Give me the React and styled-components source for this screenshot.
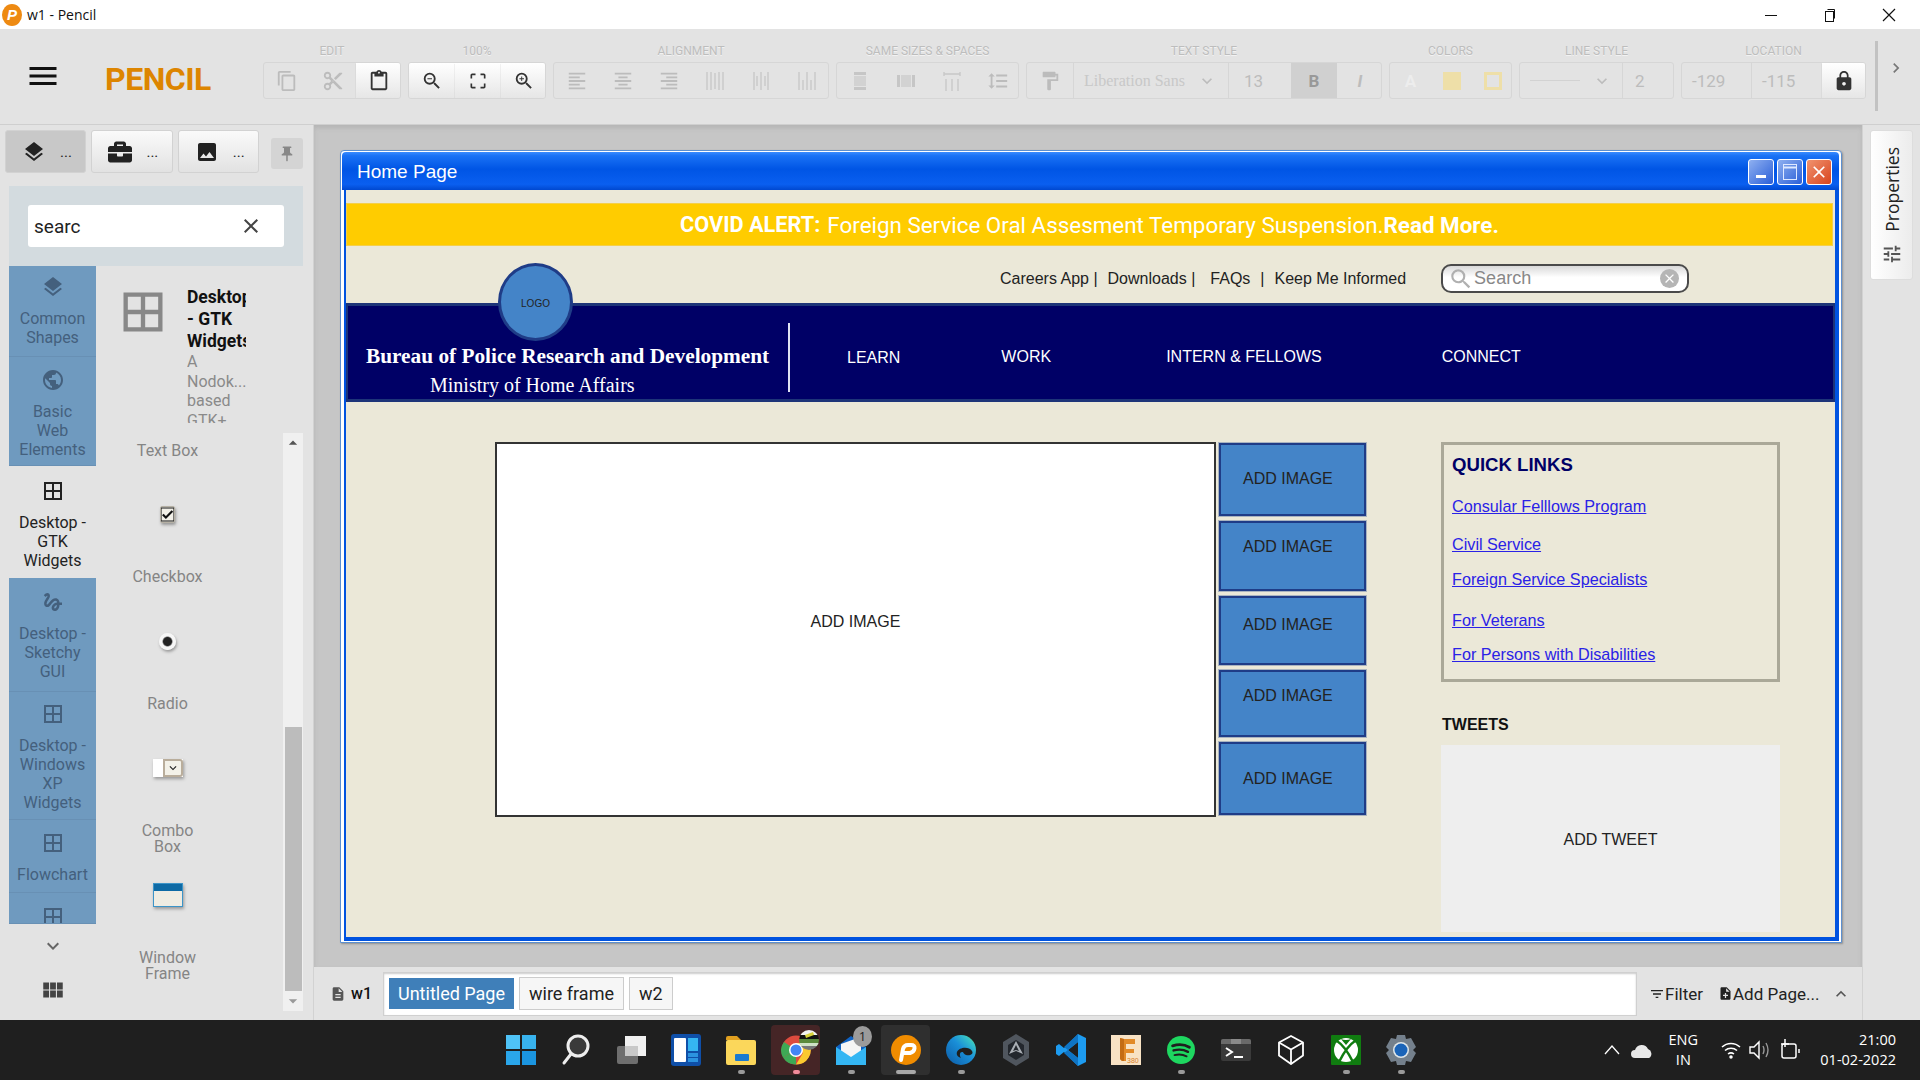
import React from 'react'
import styled, { createGlobalStyle } from 'styled-components'
import { FaBriefcase } from 'react-icons/fa'
import {
  MdContentCopy, MdContentCut, MdContentPaste, MdZoomIn, MdZoomOut, MdCropFree,
  MdFormatAlignLeft, MdFormatAlignCenter, MdFormatAlignRight, MdFormatPaint,
  MdFormatLineSpacing, MdLock, MdLayers, MdImage, MdPushPin, MdClose,
  MdPublic, MdBorderAll, MdGesture, MdViewModule, MdKeyboardArrowDown, MdKeyboardArrowUp,
  MdKeyboardArrowRight, MdDescription, MdFilterList, MdNoteAdd, MdTune, MdSearch,
  MdArrowDropUp, MdArrowDropDown, MdCheck, MdMenu,
} from 'react-icons/md'

const GlobalStyle = createGlobalStyle`
  html, body { margin: 0; padding: 0; }
  body { width: 1920px; height: 1080px; overflow: hidden; font-family: Roboto, sans-serif; }
  * { box-sizing: border-box; }
`

const Page = styled.div`
  width: 1920px;
  height: 1080px;
  display: flex;
  flex-direction: column;
  background: #e3e3e3;
`

/* title bar */
const TitleBar = styled.div`
  height: 29px;
  background: #fff;
  display: flex;
  align-items: center;
  padding-left: 2px;
  font: 14px 'Open Sans', sans-serif;
  color: #111;
`
const AppBadge = styled.div`
  width: 20px;
  height: 22px;
  margin-right: 5px;
  border-radius: 50%;
  background: #ee8a12;
  color: #fff;
  font: italic bold 15px/22px 'Liberation Sans', sans-serif;
  text-align: center;
`
const WinButtons = styled.div`
  margin-left: auto;
  padding-right: 2px;
  display: flex;
`
const WinButton = styled.div`
  width: 59px;
  height: 29px;
  display: flex;
  align-items: center;
  justify-content: center;
`

/* toolbar */
const Toolbar = styled.div`
  height: 96px;
  display: flex;
  align-items: flex-start;
  padding-left: 25px;
  border-bottom: 1px solid #cfcfcf;
  position: relative;
`
const MenuIcon = styled.div`
  width: 36px;
  height: 36px;
  margin-top: 29px;
  color: #111;
`
const Brand = styled.div`
  width: 158px;
  margin: 32px 0 0 44px;
  font: bold 32px/36px Roboto, sans-serif;
  letter-spacing: -0.5px;
  color: #dd8500;
`
const Sections = styled.div`
  display: flex;
  gap: 7px;
  padding-top: 13px;
`
const Section = styled.div`
  width: ${(p) => p.$w}px;
  display: flex;
  flex-direction: column;
  align-items: center;
`
const SectionLabel = styled.div`
  height: 14px;
  margin: 2px 0 4px;
  font: 12px/14px Roboto, sans-serif;
  color: #bdbdbd;
  white-space: nowrap;
  text-shadow: 0 1px 0 #f2f2f2;
`
const ToolGroup = styled.div`
  width: 100%;
  height: 37px;
  display: flex;
  border: 1px solid #d6d6d6;
  border-radius: 3px;
  overflow: hidden;
`
const ToolButton = styled.div`
  width: ${(p) => p.$w || 46}px;
  flex: none;
  display: flex;
  align-items: center;
  justify-content: ${(p) => (p.$start ? 'flex-start' : 'center')};
  padding-left: ${(p) => (p.$start ? p.$start : 0)}px;
  font: 17px Roboto, sans-serif;
  color: ${(p) => (p.$on ? '#333' : p.$pressed ? '#999' : p.$pale ? '#ededed' : '#bcbcbc')};
  background: ${(p) => (p.$on ? 'linear-gradient(#fff, #e6e6e6)' : p.$pressed ? '#d0d0d0' : 'transparent')};
  border-left: ${(p) => (p.$line ? '1px solid #d6d6d6' : 'none')};
  box-shadow: ${(p) => (p.$on ? '0 1px 1px #b5b5b5' : 'none')};
`
const FontName = styled.span`
  font: 16px 'Liberation Serif', serif;
  color: #c8c8c8;
  margin-right: 12px;
  white-space: nowrap;
`
const LineSample = styled.span`
  width: 50px;
  height: 1px;
  background: #d2d2d2;
  margin-right: 12px;
`
const Swatch = styled.div`
  width: 18px;
  height: 18px;
  background: ${(p) => (p.$hollow ? 'transparent' : '#eedfa8')};
  border: 3px solid #eedfa8;
`
const ToolbarEnd = styled.div`
  margin-left: 9px;
  height: 70px;
  margin-top: 12px;
  border-left: 3px solid #c2c2c2;
  padding: 17px 0 0 8px;
  color: #777;
`

/* middle */
const Middle = styled.div`
  height: 895px;
  display: flex;
`

/* left panel */
const Sidebar = styled.div`
  width: 314px;
  flex: none;
  padding: 5px 10px 0 9px;
  border-right: 1px solid #d2d2d2;
  display: flex;
  flex-direction: column;
`
const PanelTabs = styled.div`
  height: 56px;
  margin-left: -4px;
  display: flex;
  gap: 5px;
`
const PanelTab = styled.div`
  width: 82px;
  height: 43px;
  display: flex;
  align-items: center;
  padding-left: 16px;
  gap: 14px;
  font: 15px Roboto, sans-serif;
  color: #222;
  border: 1px solid #d2d2d2;
  border-radius: 3px;
  background: ${(p) => (p.$active ? '#c8c8c8' : 'linear-gradient(#fafafa, #e2e2e2)')};
`
const PinButton = styled.div`
  width: 32px;
  height: 31px;
  margin: 8px 0 0 7px;
  background: #d4d4d4;
  border-radius: 3px;
  color: #888;
  display: flex;
  align-items: center;
  justify-content: center;
`
const SearchPanel = styled.div`
  height: 80px;
  padding: 19px;
  background: #d3dbdf;
`
const SearchInput = styled.div`
  height: 42px;
  padding: 0 21px 0 6px;
  display: flex;
  align-items: center;
  justify-content: space-between;
  background: #fff;
  border-radius: 3px;
  font: 19px Roboto, sans-serif;
  color: #222;
`
const PanelBody = styled.div`
  flex: 1;
  display: flex;
  min-height: 0;
`
const CollectionColumn = styled.div`
  width: 87px;
  flex: none;
  display: flex;
  flex-direction: column;
  align-items: stretch;
`
const Collection = styled.div`
  height: ${(p) => p.$h}px;
  flex: none;
  overflow: hidden;
  padding-top: ${(p) => p.$pad}px;
  display: flex;
  flex-direction: column;
  align-items: center;
  text-align: center;
  font: 16px/19px Roboto, sans-serif;
  color: ${(p) => (p.$active ? '#222' : '#44607d')};
  background: ${(p) => (p.$active ? '#e3e3e3' : '#6f9abf')};
  border-bottom: 1px solid ${(p) => (p.$active ? '#e3e3e3' : '#6890b4')};
`
const CollectionIcon = styled.div`
  height: 24px;
  margin-bottom: 10px;
`
const ColumnFoot = styled.div`
  flex: 1;
  display: flex;
  flex-direction: column;
  align-items: center;
  padding-top: 10px;
  gap: 19px;
  color: #666;
`
const GridFoot = styled.div`
  color: #444;
`
const ShapeColumn = styled.div`
  flex: 1;
  min-width: 0;
  display: flex;
  flex-direction: column;
`
const ShapeHeader = styled.div`
  height: 157px;
  flex: none;
  overflow: hidden;
  display: flex;
  padding: 20px 0 0 21px;
`
const HeaderIcon = styled.div`
  width: 45px;
  height: 45px;
  color: #888;
`
const HeaderText = styled.div`
  width: 59px;
  margin-left: 25px;
  overflow: hidden;
  white-space: nowrap;
`
const HeaderTitle = styled.div`
  font: bold 17.5px/22px Roboto, sans-serif;
  color: #111;
`
const HeaderDesc = styled.div`
  font: 16px/19.6px Roboto, sans-serif;
  color: #8a8a8a;
`
const ShapeList = styled.div`
  flex: 1;
  margin-top: 10px;
  display: flex;
  min-height: 0;
`
const ShapeItems = styled.div`
  width: 144px;
  margin-right: 44px;
  padding-top: 10px;
  display: flex;
  flex-direction: column;
  align-items: center;
  text-align: center;
  font: 16px/16px Roboto, sans-serif;
  color: #858585;
`
const ShapeLabel = styled.div`
  height: 16px;
  line-height: 16px;
  flex: none;
`
const ShapeItem = styled.div`
  height: 127px;
  width: 100%;
  flex: none;
`
const ShapeSlot = styled.div`
  height: 110px;
  display: flex;
  align-items: center;
  justify-content: center;
`
const Scrollbar = styled.div`
  width: 20px;
  height: 578px;
  flex: none;
  background: #f0f0f0;
  display: flex;
  flex-direction: column;
  align-items: center;
  color: #999;
`
const ScrollSpace = styled.div`
  height: 294px;
  color: #555;
`
const ScrollThumb = styled.div`
  width: 17px;
  height: 264px;
  background: #bcbcbc;
`
const MiniCheck = styled.div`
  width: 15px;
  height: 17px;
  background: #f2f0e8;
  border: 1px solid #b5b0a4;
  border-radius: 2px;
  box-shadow: 1px 2px 3px #999;
  color: #111;
  display: flex;
  align-items: center;
  justify-content: center;
`
const MiniRadio = styled.div`
  width: 17px;
  height: 17px;
  border-radius: 50%;
  background: radial-gradient(circle, #222 0 4px, #f6f6f6 5.5px);
  box-shadow: 1px 2px 3px #999;
`
const MiniCombo = styled.div`
  width: 30px;
  height: 18px;
  display: flex;
  justify-content: flex-end;
  background: #fff;
  box-shadow: 1px 2px 3px #999;
`
const MiniComboArrow = styled.div`
  width: 20px;
  border: 2px solid #b9ad9b;
  border-radius: 0 3px 3px 0;
  background: #f3f1e8;
  color: #222;
  display: flex;
  align-items: center;
  justify-content: center;
`
const MiniWindow = styled.div`
  width: 30px;
  height: 24px;
  background: linear-gradient(#0e6aa5 0 7px, #efece2 7px);
  border: 1px solid #3c94c8;
  box-shadow: 1px 2px 3px #999;
`

/* canvas */
const Center = styled.div`
  flex: 1;
  min-width: 0;
  display: flex;
  flex-direction: column;
`
const Canvas = styled.div`
  height: 842px;
  padding: 25px 20px 0 26px;
  background: #c6c6c6;
  box-shadow: inset 0 3px 4px #b5b5b5;
`
const WireWindow = styled.div`
  width: 1502px;
  height: 793px;
  display: flex;
  flex-direction: column;
  border: 1px solid #5b8fd0;
  border-radius: 4px 4px 0 0;
  background: #fff;
  box-shadow: 1px 1px 2px #8f8f8f;
  padding: 1px 2px 1px 3px;
`
const WindowFrame = styled.div`
  flex: 1;
  min-height: 0;
  display: flex;
  flex-direction: column;
  border: solid #0053e0;
  border-width: 0 4px 4px 2px;
`
const WindowTitle = styled.div`
  height: 38px;
  flex: none;
  margin-left: -2px;
  display: flex;
  align-items: center;
  padding: 1px 7px 0 15px;
  border-radius: 4px 4px 0 0;
  background: linear-gradient(#3a8cff 0, #1a72f5 10%, #0055e5 45%, #0a5ff0 85%, #0048d0 100%);
  font: 19px 'Liberation Sans', sans-serif;
  color: #fff;
`
const WindowControls = styled.div`
  margin-left: auto;
  display: flex;
  gap: 3px;
`
const WindowControl = styled.div`
  width: 26px;
  height: 26px;
  border: 1px solid #fff;
  border-radius: 3px;
  display: flex;
  align-items: center;
  justify-content: center;
  background: ${(p) => (p.$close ? 'linear-gradient(135deg, #f0936f, #d8451e)' : 'linear-gradient(135deg, #8fb0f0, #2a5fd8)')};
  color: #fff;
`
const WindowBody = styled.div`
  flex: 1;
  min-height: 0;
  background: #ebe8d8;
  padding-top: 13px;
`
const AlertBar = styled.div`
  height: 43px;
  margin-right: 2px;
  display: flex;
  align-items: center;
  justify-content: center;
  background: #ffcc00;
  border: 1px solid #f4cf4a;
  font: 22.4px Roboto, sans-serif;
  color: #fff;
  white-space: pre;
`
const AlertLead = styled.b`
  font-weight: 700;
  font-size: 21.7px;
  margin-right: 7px;
`
const AlertMore = styled.b`
  font-weight: 700;
`
const UtilityRow = styled.div`
  height: 57px;
  padding-top: 8px;
  display: flex;
  align-items: center;
  font: 16px 'Liberation Sans', sans-serif;
  color: #222;
  white-space: pre;
`
const UtilityLink = styled.span`
  margin-left: ${(p) => p.$left}px;
`
const SearchBox = styled.div`
  width: 248px;
  height: 29px;
  margin-left: 35px;
  padding: 0 8px 0 5px;
  display: flex;
  align-items: center;
  border: 2px solid #4a4a4a;
  border-radius: 10px;
  background: linear-gradient(#d9d9d9, #fff 45%);
  font: 18px 'Liberation Sans', sans-serif;
  color: #888;
`
const SearchClear = styled.div`
  width: 19px;
  height: 19px;
  margin-left: auto;
  border-radius: 50%;
  background: #b5b5b5;
  color: #fff;
  display: flex;
  align-items: center;
  justify-content: center;
`
const Masthead = styled.div`
  position: relative;
  height: 99px;
  display: flex;
  background: #000066;
  border: solid #1d3478;
  border-width: 3px 2px 3px 2px;
  color: #fff;
`
const LogoBadge = styled.div`
  position: absolute;
  left: 150px;
  top: -43px;
  width: 75px;
  height: 78px;
  padding-top: 2px;
  border-radius: 50%;
  background: #4484c8;
  border: 3px solid #1f3c87;
  display: flex;
  align-items: center;
  justify-content: center;
  font: 10px 'Liberation Sans', sans-serif;
  color: #222;
`
const Agency = styled.div`
  width: 442px;
  height: 69px;
  margin-top: 17px;
  padding: 21px 0 0 18px;
  border-right: 2px solid #dfe3f2;
  flex: none;
`
const AgencyName = styled.div`
  font: bold 21.3px/24px 'Liberation Serif', serif;
  white-space: nowrap;
`
const AgencyDept = styled.div`
  margin: 5px 0 0 64px;
  font: 20px/24px 'Liberation Serif', serif;
  white-space: nowrap;
`
const NavLink = styled.div`
  margin-left: ${(p) => p.$left}px;
  padding-top: ${(p) => p.$top}px;
  font: 16px/20px 'Liberation Sans', sans-serif;
  white-space: nowrap;
`
const ContentRow = styled.div`
  display: flex;
  padding: 40px 0 0 149px;
`
const HeroImage = styled.div`
  width: 721px;
  height: 375px;
  flex: none;
  display: flex;
  align-items: center;
  justify-content: center;
  padding-bottom: 16px;
  background: #fff;
  border: 2px solid #333;
  font: 16px 'Liberation Sans', sans-serif;
  color: #222;
`
const Thumbs = styled.div`
  width: 149px;
  flex: none;
  margin-left: 2px;
  display: flex;
  flex-direction: column;
  gap: 3px;
`
const Thumb = styled.div`
  height: ${(p) => p.$h}px;
  padding: ${(p) => p.$top}px 0 0 22px;
  background: #4484c8;
  border: 3px solid #1f3c87;
  outline: 1px solid #a9b3c0;
  outline-offset: -1px;
  font: 16px/20px 'Liberation Sans', sans-serif;
  color: #222;
`
const RightColumn = styled.div`
  width: 339px;
  flex: none;
  margin-left: 74px;
`
const QuickLinks = styled.div`
  height: 240px;
  padding: 9px 0 0 8px;
  border: 3px solid #aaa898;
`
const QuickTitle = styled.div`
  font: bold 18.6px/22px 'Liberation Sans', sans-serif;
  color: #000066;
`
const QuickLink = styled.a`
  display: block;
  margin-top: ${(p) => p.$top}px;
  font: 16.2px/20px 'Liberation Sans', sans-serif;
  color: #2a22e6;
  text-decoration: underline;
`
const TweetsTitle = styled.div`
  margin: 33px 0 10px 1px;
  font: bold 16px/20px 'Liberation Sans', sans-serif;
  color: #111;
`
const TweetBox = styled.div`
  height: 187px;
  padding-top: 3px;
  display: flex;
  align-items: center;
  justify-content: center;
  background: #eeeeee;
  font: 16px 'Liberation Sans', sans-serif;
  color: #222;
`

/* page tabs */
const PageBar = styled.div`
  flex: 1;
  display: flex;
  align-items: center;
  padding-left: 16px;
  font: 16px Roboto, sans-serif;
  color: #111;
`
const DocName = styled.div`
  width: 53px;
  display: flex;
  align-items: center;
  gap: 5px;
  font: 500 16px Roboto, sans-serif;
`
const PageTabs = styled.div`
  width: 1254px;
  height: 44px;
  display: flex;
  align-items: center;
  padding-left: 5px;
  gap: 5px;
  background: #fff;
  border: 1px solid #d0d0d0;
  box-shadow: inset 0 1px 2px #ccc;
`
const PageTab = styled.div`
  height: ${(p) => (p.$active ? 31 : 33)}px;
  padding: 0 ${(p) => p.$pad}px;
  display: flex;
  align-items: center;
  font: 18px Roboto, sans-serif;
  color: ${(p) => (p.$active ? '#fff' : '#222')};
  background: ${(p) => (p.$active ? '#3f7fb9' : '#f6f6f6')};
  border: ${(p) => (p.$active ? 'none' : '1px solid #ccc')};
`
const PageAction = styled.div`
  margin-left: ${(p) => p.$left}px;
  display: flex;
  align-items: center;
  color: #222;
  font: 17px Roboto, sans-serif;
  white-space: nowrap;
`

/* right panel */
const PropertiesPanel = styled.div`
  width: 58px;
  flex: none;
  padding: 5px 6px 0 7px;
  border-left: 1px solid #d2d2d2;
`
const PropertiesTab = styled.div`
  width: 43px;
  height: 150px;
  display: flex;
  flex-direction: column;
  align-items: center;
  padding-top: 16px;
  gap: 11px;
  border: 1px solid #ddd;
  border-radius: 3px;
  background: linear-gradient(90deg, #fff, #ececec);
  color: #555;
`
const PropertiesLabel = styled.div`
  writing-mode: vertical-rl;
  transform: rotate(180deg);
  font: 17.5px 'Open Sans', sans-serif;
  color: #222;
`

/* taskbar */
const Taskbar = styled.div`
  height: 60px;
  flex: none;
  display: flex;
  align-items: center;
  padding-left: 493px;
  background: #1f1f1f;
  color: #fff;
`
const TaskSlot = styled.div`
  position: relative;
  width: 55px;
  height: 50px;
  display: flex;
  align-items: center;
  justify-content: center;
  &::before {
    content: '';
    position: absolute;
    left: 3px;
    right: 3px;
    top: 0;
    bottom: 0;
    border-radius: 4px;
    background: ${(p) => p.$bg || 'transparent'};
  }
  &::after {
    content: '';
    position: absolute;
    bottom: 1px;
    left: 50%;
    height: 4px;
    width: ${(p) => (p.$wide ? 20 : 7)}px;
    margin-left: ${(p) => (p.$wide ? -10 : -3)}px;
    border-radius: 2px;
    background: ${(p) => p.$dot || 'transparent'};
  }
  svg { position: relative; overflow: visible; }
`
const MailBadge = styled.div`
  position: absolute;
  top: 1px;
  left: 30px;
  width: 19px;
  height: 21px;
  border-radius: 50%;
  background: #9b9b9b;
  font: 13px/21px 'Open Sans', sans-serif;
  text-align: center;
  color: #222;
`
const Tray = styled.div`
  margin-left: auto;
  display: flex;
  align-items: center;
  padding-right: 24px;
  font: 14.5px 'Open Sans', sans-serif;
`
const TrayIcon = styled.div`
  margin-left: ${(p) => p.$left}px;
  display: flex;
`
const Lang = styled.div`
  margin-left: 10px;
  width: 40px;
  text-align: center;
  line-height: 20px;
`
const Clock = styled.div`
  margin-left: 20px;
  text-align: right;
  line-height: 20px;
`

const Bars = ({ d }) => (
  <svg width="22" height="22" viewBox="0 0 22 22" fill="none" stroke="#c8c8c8" strokeWidth="1.4">
    <path d={d} />
  </svg>
)
const SameHeight = () => (
  <svg width="22" height="22" viewBox="0 0 22 22">
    <rect x="5" y="2" width="12" height="3" fill="#c6c6c6" />
    <rect x="5" y="6" width="12" height="10" fill="#d2d2d2" />
    <rect x="5" y="17" width="12" height="3" fill="#c6c6c6" />
  </svg>
)
const SameWidth = () => (
  <svg width="22" height="22" viewBox="0 0 22 22">
    <rect x="2" y="5" width="3" height="12" fill="#c6c6c6" />
    <rect x="6" y="5" width="10" height="12" fill="#d2d2d2" />
    <rect x="17" y="5" width="3" height="12" fill="#c6c6c6" />
  </svg>
)

const Tool = ({ children, ...rest }) => <ToolButton {...rest}>{children}</ToolButton>

const distributeIcons = [
  'M3 2v18M7 2v18M15 2v18M19 2v18M11 3v16',
  'M4 2v18M7 6v10M11 2v18M15 6v10M18 2v18',
  'M3 2v18M7 10v10M11 2v18M15 10v10M19 2v18',
]

function AppToolbar() {
  return (
    <Toolbar>
      <MenuIcon><MdMenu size={36} /></MenuIcon>
      <Brand>PENCIL</Brand>
      <Sections>
        <Section $w={138}>
          <SectionLabel>EDIT</SectionLabel>
          <ToolGroup>
            <Tool><MdContentCopy size={22} /></Tool>
            <Tool><MdContentCut size={22} /></Tool>
            <Tool $on $w={46}><MdContentPaste size={22} /></Tool>
          </ToolGroup>
        </Section>
        <Section $w={138}>
          <SectionLabel>100%</SectionLabel>
          <ToolGroup>
            <Tool $on><MdZoomOut size={22} /></Tool>
            <Tool $on><MdCropFree size={20} /></Tool>
            <Tool $on><MdZoomIn size={22} /></Tool>
          </ToolGroup>
        </Section>
        <Section $w={276}>
          <SectionLabel>ALIGNMENT</SectionLabel>
          <ToolGroup>
            <Tool><MdFormatAlignLeft size={22} /></Tool>
            <Tool><MdFormatAlignCenter size={22} /></Tool>
            <Tool><MdFormatAlignRight size={22} /></Tool>
            {distributeIcons.map((d) => <Tool key={d}><Bars d={d} /></Tool>)}
          </ToolGroup>
        </Section>
        <Section $w={183}>
          <SectionLabel>SAME SIZES &amp; SPACES</SectionLabel>
          <ToolGroup>
            <Tool><SameHeight /></Tool>
            <Tool><SameWidth /></Tool>
            <Tool><Bars d="M3 4h16M3 2v4M19 2v4M5 9v12M11 9v12M17 9v12" /></Tool>
            <Tool><MdFormatLineSpacing size={22} /></Tool>
          </ToolGroup>
        </Section>
        <Section $w={356}>
          <SectionLabel>TEXT STYLE</SectionLabel>
          <ToolGroup>
            <Tool><MdFormatPaint size={22} /></Tool>
            <Tool $w={155} $line $start={10}>
              <FontName>Liberation Sans</FontName>
              <MdKeyboardArrowDown size={20} />
            </Tool>
            <Tool $w={63} $line $start={15}>13</Tool>
            <Tool $pressed><b>B</b></Tool>
            <Tool><i><b>I</b></i></Tool>
          </ToolGroup>
        </Section>
        <Section $w={123}>
          <SectionLabel>COLORS</SectionLabel>
          <ToolGroup>
            <Tool $w={41} $pale><b>A</b></Tool>
            <Tool $w={41}><Swatch /></Tool>
            <Tool $w={41}><Swatch $hollow /></Tool>
          </ToolGroup>
        </Section>
        <Section $w={155}>
          <SectionLabel>LINE STYLE</SectionLabel>
          <ToolGroup>
            <Tool $w={102} $start={10}>
              <LineSample />
              <MdKeyboardArrowDown size={20} />
            </Tool>
            <Tool $w={51} $line $start={12}>2</Tool>
          </ToolGroup>
        </Section>
        <Section $w={185}>
          <SectionLabel>LOCATION</SectionLabel>
          <ToolGroup>
            <Tool $w={69} $start={10}>-129</Tool>
            <Tool $w={71} $line $start={10}>-115</Tool>
            <Tool $on $w={44}><MdLock size={22} /></Tool>
          </ToolGroup>
        </Section>
      </Sections>
      <ToolbarEnd><MdKeyboardArrowRight size={20} /></ToolbarEnd>
    </Toolbar>
  )
}

const collections = [
  { h: 91, name: ['Common', 'Shapes'], icon: <MdLayers size={24} />, pad: 9 },
  { h: 109, name: ['Basic', 'Web', 'Elements'], icon: <MdPublic size={24} />, pad: 11 },
  { h: 112, name: ['Desktop -', 'GTK', 'Widgets'], icon: <MdBorderAll size={24} />, pad: 13, active: true },
  { h: 114, name: ['Desktop -', 'Sketchy', 'GUI'], icon: <MdGesture size={24} />, pad: 12 },
  { h: 128, name: ['Desktop -', 'Windows', 'XP', 'Widgets'], icon: <MdBorderAll size={24} />, pad: 10 },
  { h: 73, name: ['Flowchart'], icon: <MdBorderAll size={24} />, pad: 11 },
  { h: 31, name: [], icon: <MdBorderAll size={24} />, pad: 12 },
]

function LeftPanel() {
  return (
    <Sidebar>
      <PanelTabs>
        <PanelTab $active><MdLayers size={24} />...</PanelTab>
        <PanelTab><FaBriefcase size={24} />...</PanelTab>
        <PanelTab><MdImage size={24} />...</PanelTab>
        <PinButton><MdPushPin size={18} /></PinButton>
      </PanelTabs>
      <SearchPanel>
        <SearchInput>searc<MdClose size={24} color="#444" /></SearchInput>
      </SearchPanel>
      <PanelBody>
        <CollectionColumn>
          {collections.map((c, i) => (
            <Collection key={i} $h={c.h} $active={c.active} $pad={c.pad}>
              <CollectionIcon>{c.icon}</CollectionIcon>
              {c.name.map((line) => <div key={line}>{line}</div>)}
            </Collection>
          ))}
          <ColumnFoot>
            <MdKeyboardArrowDown size={24} />
            <GridFoot><MdViewModule size={26} /></GridFoot>
          </ColumnFoot>
        </CollectionColumn>
        <ShapeColumn>
          <ShapeHeader>
            <HeaderIcon><MdBorderAll size={52} /></HeaderIcon>
            <HeaderText>
              <HeaderTitle>Desktop<br />- GTK<br />Widgets</HeaderTitle>
              <HeaderDesc>A<br />Nodok...<br />based<br />GTK+</HeaderDesc>
            </HeaderText>
          </ShapeHeader>
          <ShapeList>
            <ShapeItems>
              <ShapeLabel>Text Box</ShapeLabel>
              <ShapeItem>
                <ShapeSlot><MiniCheck><MdCheck size={15} stroke="currentColor" strokeWidth={2} /></MiniCheck></ShapeSlot>
                <ShapeLabel>Checkbox</ShapeLabel>
              </ShapeItem>
              <ShapeItem>
                <ShapeSlot><MiniRadio /></ShapeSlot>
                <ShapeLabel>Radio</ShapeLabel>
              </ShapeItem>
              <ShapeItem>
                <ShapeSlot><MiniCombo><MiniComboArrow><MdKeyboardArrowDown size={14} /></MiniComboArrow></MiniCombo></ShapeSlot>
                Combo<br />Box
              </ShapeItem>
              <ShapeItem>
                <ShapeSlot><MiniWindow /></ShapeSlot>
                Window<br />Frame
              </ShapeItem>
            </ShapeItems>
            <Scrollbar>
              <ScrollSpace><MdArrowDropUp size={20} /></ScrollSpace>
              <ScrollThumb />
              <MdArrowDropDown size={20} />
            </Scrollbar>
          </ShapeList>
        </ShapeColumn>
      </PanelBody>
    </Sidebar>
  )
}

function WireframeWindow() {
  return (
    <WireWindow>
      <WindowTitle>
        Home Page
        <WindowControls>
          <WindowControl>
            <svg width="14" height="14"><rect x="2" y="10" width="10" height="3" fill="#fff" /></svg>
          </WindowControl>
          <WindowControl>
            <svg width="16" height="18" fill="none" stroke="#dfe9ff"><rect x="1.5" y="1.5" width="13" height="15" /><path d="M1 4.5h14" strokeWidth="2" /></svg>
          </WindowControl>
          <WindowControl $close><MdClose size={20} /></WindowControl>
        </WindowControls>
      </WindowTitle>
      <WindowFrame>
        <WindowBody>
          <AlertBar>
            <AlertLead>COVID ALERT:</AlertLead>Foreign Service Oral Assesment Temporary Suspension.<AlertMore>Read More.</AlertMore>
          </AlertBar>
          <UtilityRow>
            <UtilityLink $left={654}>Careers App |</UtilityLink>
            <UtilityLink $left={10}>Downloads |</UtilityLink>
            <UtilityLink $left={15}>FAQs</UtilityLink>
            <UtilityLink $left={10}>|</UtilityLink>
            <UtilityLink $left={10}>Keep Me Informed</UtilityLink>
            <SearchBox>
              <MdSearch size={26} color="#b0b0b0" />
              Search
              <SearchClear><MdClose size={15} /></SearchClear>
            </SearchBox>
          </UtilityRow>
          <Masthead>
            <LogoBadge>LOGO</LogoBadge>
            <Agency>
              <AgencyName>Bureau of Police Research and Development</AgencyName>
              <AgencyDept>Ministry of Home Affairs</AgencyDept>
            </Agency>
            <NavLink $left={57} $top={42}>LEARN</NavLink>
            <NavLink $left={101} $top={41}>WORK</NavLink>
            <NavLink $left={115} $top={41}>INTERN &amp; FELLOWS</NavLink>
            <NavLink $left={120} $top={41}>CONNECT</NavLink>
          </Masthead>
          <ContentRow>
            <HeroImage>ADD IMAGE</HeroImage>
            <Thumbs>
              <Thumb $h={75} $top={24}>ADD IMAGE</Thumb>
              <Thumb $h={72} $top={14}>ADD IMAGE</Thumb>
              <Thumb $h={71} $top={17}>ADD IMAGE</Thumb>
              <Thumb $h={69} $top={14}>ADD IMAGE</Thumb>
              <Thumb $h={75} $top={25}>ADD IMAGE</Thumb>
            </Thumbs>
            <RightColumn>
              <QuickLinks>
                <QuickTitle>QUICK LINKS</QuickTitle>
                <QuickLink href="#" $top={20}>Consular Felllows Program</QuickLink>
                <QuickLink href="#" $top={18}>Civil Service</QuickLink>
                <QuickLink href="#" $top={15}>Foreign Service Specialists</QuickLink>
                <QuickLink href="#" $top={21}>For Veterans</QuickLink>
                <QuickLink href="#" $top={14}>For Persons with Disabilities</QuickLink>
              </QuickLinks>
              <TweetsTitle>TWEETS</TweetsTitle>
              <TweetBox>ADD TWEET</TweetBox>
            </RightColumn>
          </ContentRow>
        </WindowBody>
      </WindowFrame>
    </WireWindow>
  )
}

function Footer() {
  return (
    <PageBar>
      <DocName><MdDescription size={16} color="#555" />w1</DocName>
      <PageTabs>
        <PageTab $active $pad={9}>Untitled Page</PageTab>
        <PageTab $pad={9}>wire frame</PageTab>
        <PageTab $pad={9}>w2</PageTab>
      </PageTabs>
      <PageAction $left={12}><MdFilterList size={16} />Filter</PageAction>
      <PageAction $left={15}><MdNoteAdd size={15} />Add Page...</PageAction>
      <PageAction $left={12}><MdKeyboardArrowUp size={20} color="#555" /></PageAction>
    </PageBar>
  )
}

const WindowsLogo = () => (
  <svg width="32" height="32" viewBox="0 0 32 32">
    <path d="M1 1h14v14H1z" fill="#4fc3f7" />
    <path d="M17 1h14v14H17z" fill="#38b3ee" />
    <path d="M1 17h14v14H1z" fill="#2aa6ea" />
    <path d="M17 17h14v14H17z" fill="#1b95e0" />
  </svg>
)
const SearchGlyph = () => (
  <svg width="30" height="32" viewBox="0 0 30 32" fill="#3a3a3a" stroke="#eee" strokeWidth="3">
    <circle cx="17" cy="12" r="10" />
    <path d="M10 20L3 29" strokeLinecap="round" />
  </svg>
)
const TaskView = () => (
  <svg width="32" height="30" viewBox="0 0 32 30">
    <rect x="10" y="1" width="21" height="20" fill="#f0f0f0" />
    <rect x="2" y="11" width="21" height="18" rx="2" fill="#6e6e6e" />
    <rect x="10" y="11" width="13" height="10" fill="#c8c8c8" />
  </svg>
)
const Widgets = () => (
  <svg width="30" height="32" viewBox="0 0 30 32">
    <rect width="30" height="32" rx="3" fill="#0f4fa8" />
    <rect x="3" y="4" width="12" height="24" rx="1" fill="#fff" />
    <rect x="17" y="4" width="10" height="13" fill="#35b5f2" />
    <rect x="17" y="19" width="10" height="4" fill="#2b93e0" />
    <rect x="17" y="24" width="10" height="4" fill="#2b93e0" />
  </svg>
)
const Folder = () => (
  <svg width="32" height="30" viewBox="0 0 32 30">
    <path d="M1 3a2 2 0 0 1 2-2h9l4 4H1z" fill="#e0a020" />
    <rect x="1" y="5" width="30" height="25" rx="2" fill="#fbd75b" />
    <rect x="10" y="19" width="14" height="7" rx="1" fill="#1a7ad0" />
  </svg>
)
const Chrome = () => (
  <svg width="30" height="30" viewBox="0 0 30 30">
    <defs>
      <clipPath id="chromeBadge"><circle cx="28" cy="5" r="10" /></clipPath>
    </defs>
    <circle cx="15" cy="15" r="14.5" fill="#dd4b3e" />
    <path d="M15 15L2 22.5A15 15 0 0 0 15 29.5z" fill="#3ea955" />
    <path d="M15 15L2 22.5A14.5 14.5 0 0 1 3 7z" fill="#3ea955" />
    <path d="M15 8h13a14.5 14.5 0 0 1-13 21.5L22 18z" fill="#fbc92f" />
    <circle cx="15" cy="15" r="7" fill="#fff" />
    <circle cx="15" cy="15" r="5.5" fill="#4285f4" />
    <g clipPath="url(#chromeBadge)">
      <rect x="18" y="-5" width="20" height="5" fill="#f2f2f2" />
      <rect x="18" y="0" width="20" height="4" fill="#111" />
      <path d="M24 0l8-3 1 3-8 3z" fill="#d9d23a" />
      <rect x="18" y="4" width="20" height="4" fill="#5a8a3c" />
      <rect x="18" y="8" width="20" height="3" fill="#cfe2c6" />
      <rect x="18" y="11" width="20" height="4" fill="#777" />
    </g>
  </svg>
)
const Mail = () => (
  <svg width="30" height="30" viewBox="0 0 30 30">
    <path d="M0 12L15 1l15 11v18H0z" fill="#0f63c4" />
    <path d="M5 9l14-5 6 6v10L15 24 5 20z" fill="#f5f5f5" />
    <path d="M0 12l15 10 15-10v18H0z" fill="#34b6f3" />
  </svg>
)
const PencilLogo = () => (
  <svg width="30" height="30" viewBox="0 0 30 30">
    <circle cx="15" cy="15" r="15" fill="#f08c00" />
    <path d="M10 25l2-11q1-4 5-4h3q4 0 3.500 3.500T19 18h-6" fill="none" stroke="#fff" strokeWidth="4" strokeLinecap="round" strokeLinejoin="round" />
  </svg>
)
const Edge = () => (
  <svg width="30" height="30" viewBox="0 0 30 30">
    <defs>
      <linearGradient id="edgeFill" x1="0" y1="1" x2="1" y2="0">
        <stop offset="0" stopColor="#0c59a4" />
        <stop offset="0.55" stopColor="#1a8fd8" />
        <stop offset="0.8" stopColor="#35c1c9" />
        <stop offset="1" stopColor="#7bdc5a" />
      </linearGradient>
    </defs>
    <circle cx="15" cy="15" r="15" fill="url(#edgeFill)" />
    <path d="M11 17c2-5 12-6 15-1 2 3-2 5-6 4-3-1-2-3-4-3s-3 3-1 6c-3-1-5-3-4-6z" fill="#1f1f1f" />
  </svg>
)
const Unity = () => (
  <svg width="28" height="32" viewBox="0 0 28 32">
    <path d="M14 0l13 8v16l-13 8L1 24V8z" fill="#50565e" />
    <path d="M14 6l8 5v10l-8 5-8-5V11z" fill="#23272d" />
    <path d="M14 7l7 13-7-3-7 3z" fill="#a9aeb4" />
    <path d="M14 11l3 6-3-1-3 1z" fill="#23272d" />
  </svg>
)
const VSCode = () => (
  <svg width="30" height="32" viewBox="0 0 30 32">
    <path d="M22 0l8 4v24l-8 4L8 18l-5 4-3-2v-8l3-2 5 4z" fill="#1d9bf0" />
    <path d="M22 8L12 16l10 8z" fill="#1f1f1f" />
    <path d="M22 0v8l-10 8-4-3zM22 32v-8L12 16l-4 3z" fill="#0f74c4" />
  </svg>
)
const Fusion = () => (
  <svg width="30" height="30" viewBox="0 0 30 30">
    <rect width="30" height="30" fill="#f8e2c4" />
    <path d="M9 3l4 1h11v5H15v5h8v4h-8v8h-4l-2-2z" fill="#e28a28" />
    <path d="M9 3l4 1v22l-2 0-2-2z" fill="#c46c14" />
    <text x="16" y="28" fontSize="7" fontFamily="Liberation Sans, sans-serif" fill="#d9802a">380</text>
  </svg>
)
const Spotify = () => (
  <svg width="28" height="28" viewBox="0 0 30 30" fill="none" stroke="#1f1f1f" strokeLinecap="round">
    <circle cx="15" cy="15" r="15" fill="#1ed760" stroke="none" />
    <path d="M6 10.500c6-2 13-1.500 18 1.500" strokeWidth="3" />
    <path d="M7 15.500c5-1.500 11-1 15.500 1.500" strokeWidth="2.500" />
    <path d="M8 20.500c4-1 9-.8 13 1.300" strokeWidth="2" />
  </svg>
)
const TerminalIcon = () => (
  <svg width="30" height="22" viewBox="0 0 30 22">
    <rect width="30" height="22" rx="2" fill="#3a3a3a" />
    <path d="M2 0h8v5H0V2a2 2 0 0 1 2-2z" fill="#6a6a6a" />
    <rect x="10" width="10" height="5" fill="#8a8a8a" />
    <path d="M20 0h8a2 2 0 0 1 2 2v3H20z" fill="#6a6a6a" />
    <path d="M5 9l6 4-6 4" fill="none" stroke="#fff" strokeWidth="2" />
    <path d="M13 18h9" stroke="#fff" strokeWidth="2" />
  </svg>
)
const Cube = () => (
  <svg width="28" height="30" viewBox="0 0 28 30" fill="none" stroke="#fff" strokeWidth="1.800" strokeLinejoin="round">
    <path d="M14 1l12 6.500v13L14 29 2 20.500v-13z" />
    <path d="M2 7.500l12 7 12-7M14 14.500V29" />
  </svg>
)
const Xbox = () => (
  <svg width="30" height="30" viewBox="0 0 30 30">
    <rect width="30" height="30" rx="1" fill="#107c10" />
    <circle cx="15" cy="15" r="12" fill="#fff" />
    <path d="M6 6Q14 11 22 27M24 6Q16 11 8 27" fill="none" stroke="#107c10" strokeWidth="2.500" />
    <path d="M10 4Q15 6 20 4L15 10z" fill="#107c10" />
  </svg>
)
const Gear = () => (
  <svg width="30" height="30" viewBox="0 0 30 30">
    <path d="M11 0h8l1 4 5-1 5 9-3 3 3 3-5 9-5-1-1 4h-8l-1-4-5 1-5-9 3-3-3-3 5-9 5 1z" fill="#74808c" />
    <circle cx="15" cy="15" r="8" fill="#dfe6ea" />
    <circle cx="15" cy="15" r="6.500" fill="#1b64b8" />
  </svg>
)

const taskItems = [
  { icon: <WindowsLogo /> },
  { icon: <SearchGlyph /> },
  { icon: <TaskView /> },
  { icon: <Widgets /> },
  { icon: <Folder />, dot: '#9a9a9a' },
  { icon: <Chrome />, dot: '#f28b9b', bg: '#452526' },
  { icon: <Mail />, dot: '#9a9a9a', badge: '1' },
  { icon: <PencilLogo />, dot: '#a8a8a8', bg: '#2f2f2f', wide: true },
  { icon: <Edge />, dot: '#9a9a9a' },
  { icon: <Unity /> },
  { icon: <VSCode /> },
  { icon: <Fusion /> },
  { icon: <Spotify />, dot: '#9a9a9a' },
  { icon: <TerminalIcon /> },
  { icon: <Cube /> },
  { icon: <Xbox />, dot: '#9a9a9a' },
  { icon: <Gear />, dot: '#9a9a9a' },
]

function WindowsTaskbar() {
  return (
    <Taskbar>
      {taskItems.map((t, i) => (
        <TaskSlot key={i} $dot={t.dot} $bg={t.bg} $wide={t.wide}>
          {t.icon}
          {t.badge && <MailBadge>{t.badge}</MailBadge>}
        </TaskSlot>
      ))}
      <Tray>
        <TrayIcon $left={0}>
          <svg width="16" height="10" fill="none" stroke="#fff" strokeWidth="1.300"><path d="M1 9l7-8 7 8" /></svg>
        </TrayIcon>
        <TrayIcon $left={11}>
          <svg width="22" height="20" viewBox="0 0 22 20" fill="#e8e8e8"><path d="M4 18a4 4 0 0 1 0-8 7 7 0 0 1 13-1 5 5 0 0 1 1 9z" /></svg>
        </TrayIcon>
        <Lang>ENG<br />IN</Lang>
        <TrayIcon $left={18}>
          <svg width="20" height="18" viewBox="0 0 20 18" fill="none" stroke="#fff" strokeWidth="1.500">
            <path d="M1 6a13 13 0 0 1 18 0M4 9.500a9 9 0 0 1 12 0M7 13a5 5 0 0 1 6 0" />
            <circle cx="10" cy="16" r="1" fill="#fff" />
          </svg>
        </TrayIcon>
        <TrayIcon $left={7}>
          <svg width="22" height="20" viewBox="0 0 22 20" fill="none" stroke="#fff" strokeWidth="1.400">
            <path d="M2 7h4l5-5v16l-5-5H2z" />
            <path d="M15 6q2 4 0 8M18 3q4 7 0 14" stroke="#999" />
          </svg>
        </TrayIcon>
        <TrayIcon $left={8}>
          <svg width="22" height="24" viewBox="0 0 22 24" fill="none" stroke="#fff" strokeWidth="1.500">
            <rect x="4" y="6" width="14" height="14" rx="2" />
            <path d="M21 11v4M7 1v8M3 6h8" />
          </svg>
        </TrayIcon>
        <Clock>21:00<br />01-02-2022</Clock>
      </Tray>
    </Taskbar>
  )
}

export default function App() {
  return (
    <Page>
      <GlobalStyle />
      <TitleBar>
        <AppBadge>P</AppBadge>
        w1 - Pencil
        <WinButtons>
          <WinButton>
            <svg width="12" height="12" stroke="#111"><path d="M0 6.500h12" /></svg>
          </WinButton>
          <WinButton>
            <svg width="12" height="14" fill="none" stroke="#111"><rect x="1.500" y="3.500" width="8" height="10" /><path d="M3.500 1.500h7v9" /></svg>
          </WinButton>
          <WinButton>
            <svg width="14" height="14" stroke="#111" strokeWidth="1.200"><path d="M1 1l12 12M13 1L1 13" /></svg>
          </WinButton>
        </WinButtons>
      </TitleBar>
      <AppToolbar />
      <Middle>
        <LeftPanel />
        <Center>
          <Canvas><WireframeWindow /></Canvas>
          <Footer />
        </Center>
        <PropertiesPanel>
          <PropertiesTab>
            <PropertiesLabel>Properties</PropertiesLabel>
            <MdTune size={22} />
          </PropertiesTab>
        </PropertiesPanel>
      </Middle>
      <WindowsTaskbar />
    </Page>
  )
}
